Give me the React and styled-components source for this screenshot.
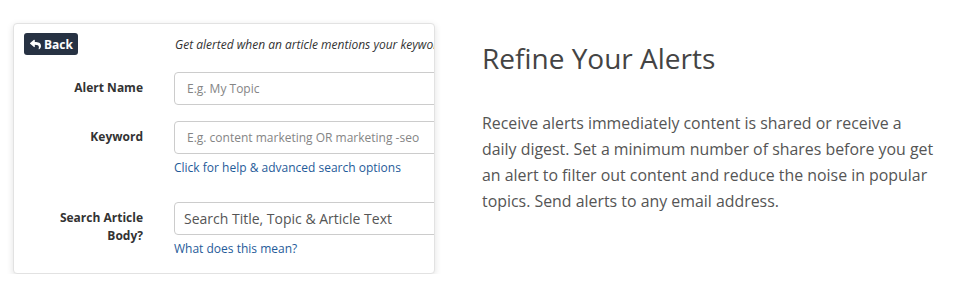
import React from "react";
import styled, { createGlobalStyle } from "styled-components";
import { FaReply } from "react-icons/fa";

const Global = createGlobalStyle`
  html, body { margin: 0; padding: 0; background: #fff; }
  body { font-family: "Open Sans", "Noto Sans", sans-serif; color: #333; }
  * { box-sizing: border-box; }
`;

const Page = styled.div`
  display: flex;
  align-items: flex-start;
  padding: 23px 0 0 13px;
`;

const Card = styled.div`
  width: 422px;
  height: 251px;
  border: 1px solid #e2e2e2;
  border-radius: 4px;
  background: #fff;
  box-shadow: 0 2px 7px rgba(0, 0, 0, 0.12);
  overflow: hidden;
  padding: 9px 0 0 10px;
`;

const Form = styled.div`
  display: grid;
  grid-template-columns: 119px 320px;
  column-gap: 31px;
  align-items: start;
`;

const Cell = styled.div`
  margin-top: ${(p) => p.$mt || 0}px;
  display: flex;
  flex-direction: column;
`;

const HeaderCell = styled.div`
  height: 22px;
  display: flex;
  align-items: center;
`;

const BackButton = styled.button`
  display: inline-flex;
  align-items: center;
  gap: 3px;
  height: 22px;
  width: 54px;
  padding: 0 0 0 6px;
  border: none;
  border-radius: 3px;
  background: #273243;
  color: #fff;
  font-family: "Open Sans", sans-serif;
  font-weight: 700;
  font-size: 12px;
  cursor: pointer;
  svg { width: 11px; height: 11px; }
`;

const Hint = styled.span`
  font-style: italic;
  font-size: 12px;
  white-space: nowrap;
  color: #333;
  padding-left: 1px;
`;

const Label = styled.label`
  margin-top: ${(p) => p.$mt || 0}px;
  padding-top: 7px;
  text-align: right;
  font-weight: 700;
  font-size: 12px;
  line-height: 18px;
  color: #333;
`;

const Input = styled.input`
  width: 320px;
  height: 33px;
  border: 1px solid #ccc;
  border-radius: 4px;
  padding: 0 12px;
  font-family: "Open Sans", sans-serif;
  font-size: 12px;
  color: #555;
  background: #fff;
  outline: none;
  &::placeholder { color: #858585; }
`;

const Select = styled.select`
  appearance: none;
  width: 320px;
  height: 33px;
  border: 1px solid #ccc;
  border-radius: 4px;
  padding: 0 9px;
  font-family: "Open Sans", sans-serif;
  font-size: 14px;
  color: #555;
  background: #fff;
  outline: none;
`;

const HelpLink = styled.a`
  margin-top: 5px;
  font-size: 12px;
  line-height: 18px;
  color: #1f5b99;
  text-decoration: none;
  white-space: nowrap;
`;

const Side = styled.div`
  margin-left: 47px;
  width: 460px;
`;

const Title = styled.h2`
  margin: 20px 0 0;
  font-size: 28px;
  font-weight: 400;
  line-height: 31px;
  color: #444;
`;

const Text = styled.p`
  margin: 36px 0 0;
  width: 457px;
  font-size: 15.9px;
  line-height: 26px;
  color: #555;
`;

export default function App() {
  return (
    <>
      <Global />
      <Page>
        <Card>
          <Form>
            <HeaderCell>
              <BackButton>
                <FaReply />
                Back
              </BackButton>
            </HeaderCell>
            <HeaderCell>
              <Hint>Get alerted when an article mentions your keyword or phrase</Hint>
            </HeaderCell>

            <Label $mt={17}>Alert Name</Label>
            <Cell $mt={17}>
              <Input placeholder="E.g. My Topic" />
            </Cell>

            <Label $mt={16}>Keyword</Label>
            <Cell $mt={16}>
              <Input placeholder="E.g. content marketing OR marketing -seo" />
              <HelpLink href="#">Click for help &amp; advanced search options</HelpLink>
            </Cell>

            <Label $mt={25}>
              Search Article
              <br />
              Body?
            </Label>
            <Cell $mt={25}>
              <Select defaultValue="all">
                <option value="all">Search Title, Topic &amp; Article Text</option>
                <option value="title">Search Title &amp; Topic Only</option>
              </Select>
              <HelpLink href="#">What does this mean?</HelpLink>
            </Cell>
          </Form>
        </Card>
        <Side>
          <Title>Refine Your Alerts</Title>
          <Text>
            Receive alerts immediately content is shared or receive a daily digest. Set a minimum
            number of shares before you get an alert to filter out content and reduce the noise in
            popular topics. Send alerts to any email address.
          </Text>
        </Side>
      </Page>
    </>
  );
}
